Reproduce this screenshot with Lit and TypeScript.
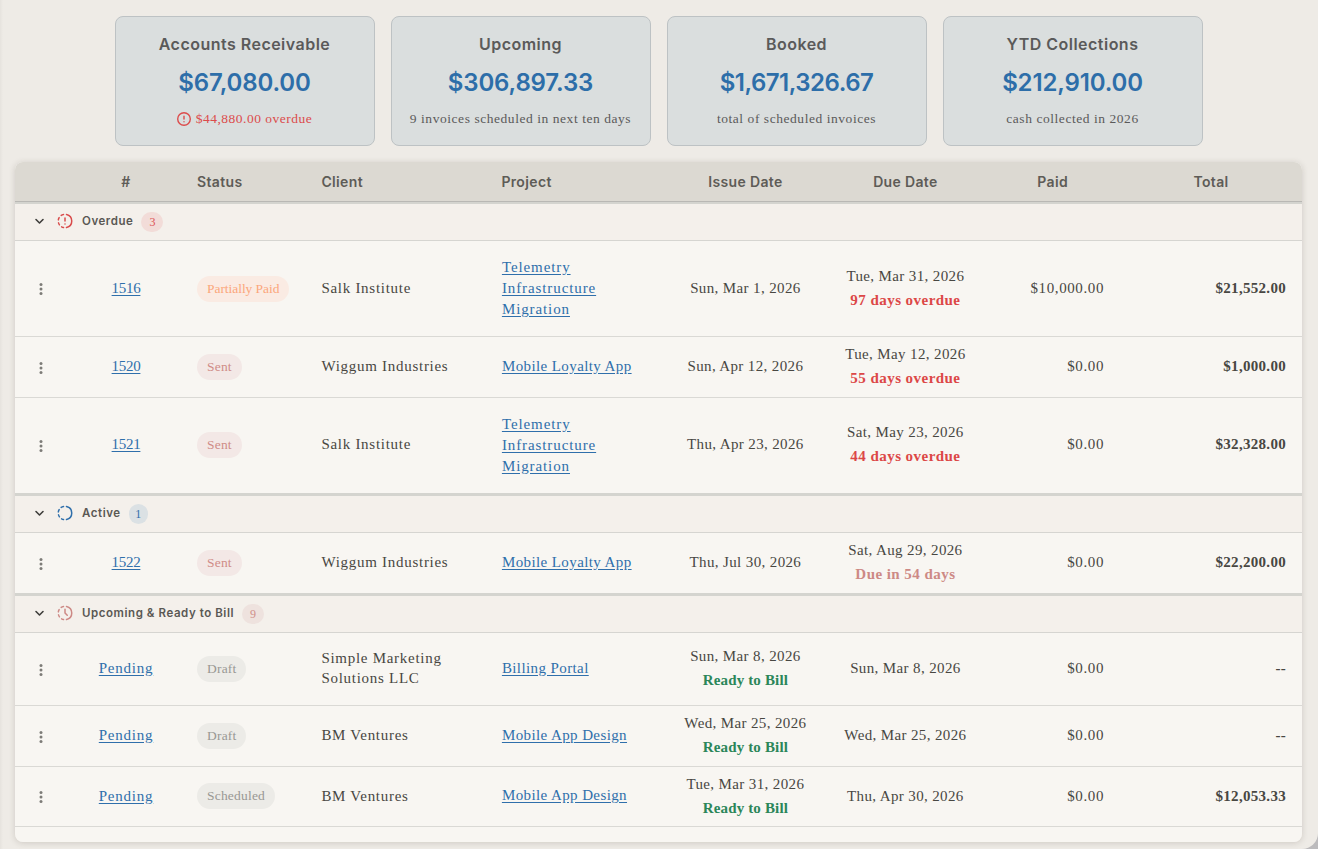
import { css, html, LitElement, nothing, svg } from "lit";
import { customElement } from "lit/decorators.js";
import { classMap } from "lit/directives/class-map.js";

type Status = "Partially Paid" | "Sent" | "Draft" | "Scheduled";

interface Invoice {
	number: string;
	status: Status;
	client: string;
	project: string;
	issued: string;
	ready?: boolean;
	due: string;
	dueNote?: string;
	late?: boolean;
	paid: string;
	total: string;
}

interface Group {
	kind: "overdue" | "active" | "upcoming";
	label: string;
	count: number;
	invoices: Invoice[];
}

const summaries = [
	{
		title: "Accounts Receivable",
		amount: "$67,080.00",
		note: "$44,880.00 overdue",
		kind: "alert",
	},
	{
		title: "Upcoming",
		amount: "$306,897.33",
		note: "9 invoices scheduled in next ten days",
		kind: "upcoming",
	},
	{
		title: "Booked",
		amount: "$1,671,326.67",
		note: "total of scheduled invoices",
		kind: "booked",
	},
	{
		title: "YTD Collections",
		amount: "$212,910.00",
		note: "cash collected in 2026",
		kind: "collected",
	},
];

const groups: Group[] = [
	{
		kind: "overdue",
		label: "Overdue",
		count: 3,
		invoices: [
			{
				number: "1516",
				status: "Partially Paid",
				client: "Salk Institute",
				project: "Telemetry Infrastructure Migration",
				issued: "Sun, Mar 1, 2026",
				due: "Tue, Mar 31, 2026",
				dueNote: "97 days overdue",
				late: true,
				paid: "$10,000.00",
				total: "$21,552.00",
			},
			{
				number: "1520",
				status: "Sent",
				client: "Wiggum Industries",
				project: "Mobile Loyalty App",
				issued: "Sun, Apr 12, 2026",
				due: "Tue, May 12, 2026",
				dueNote: "55 days overdue",
				late: true,
				paid: "$0.00",
				total: "$1,000.00",
			},
			{
				number: "1521",
				status: "Sent",
				client: "Salk Institute",
				project: "Telemetry Infrastructure Migration",
				issued: "Thu, Apr 23, 2026",
				due: "Sat, May 23, 2026",
				dueNote: "44 days overdue",
				late: true,
				paid: "$0.00",
				total: "$32,328.00",
			},
		],
	},
	{
		kind: "active",
		label: "Active",
		count: 1,
		invoices: [
			{
				number: "1522",
				status: "Sent",
				client: "Wiggum Industries",
				project: "Mobile Loyalty App",
				issued: "Thu, Jul 30, 2026",
				due: "Sat, Aug 29, 2026",
				dueNote: "Due in 54 days",
				paid: "$0.00",
				total: "$22,200.00",
			},
		],
	},
	{
		kind: "upcoming",
		label: "Upcoming & Ready to Bill",
		count: 9,
		invoices: [
			{
				number: "Pending",
				status: "Draft",
				client: "Simple Marketing Solutions LLC",
				project: "Billing Portal",
				issued: "Sun, Mar 8, 2026",
				ready: true,
				due: "Sun, Mar 8, 2026",
				paid: "$0.00",
				total: "--",
			},
			{
				number: "Pending",
				status: "Draft",
				client: "BM Ventures",
				project: "Mobile App Design",
				issued: "Wed, Mar 25, 2026",
				ready: true,
				due: "Wed, Mar 25, 2026",
				paid: "$0.00",
				total: "--",
			},
			{
				number: "Pending",
				status: "Scheduled",
				client: "BM Ventures",
				project: "Mobile App Design",
				issued: "Tue, Mar 31, 2026",
				ready: true,
				due: "Thu, Apr 30, 2026",
				paid: "$0.00",
				total: "$12,053.33",
			},
		],
	},
];

@customElement("summary-card")
export class SummaryCard extends LitElement {
	static override properties = {
		heading: { type: String },
		amount: { type: String },
		note: { type: String },
		kind: { type: String },
	};

	declare heading: string;
	declare amount: string;
	declare note: string;
	declare kind: string;

	static override styles = css`
		:host {
			display: flex;
			flex-direction: column;
			align-items: center;
			box-sizing: border-box;
			width: 260px;
			height: 130px;
			padding-top: 15px;
			border: 1px solid #bdc2c4;
			border-radius: 8px;
			background: #dadede;
			color: #5a5a5a;
			white-space: nowrap;
		}

		.heading {
			font: 600 16px/24px Inter, sans-serif;
			letter-spacing: 0.48px;
		}

		.amount {
			margin-top: 9px;
			font: 600 24px/36px Inter, sans-serif;
			letter-spacing: -0.15px;
			color: #2d6ea9;
		}

		.booked.amount {
			letter-spacing: -0.5px;
		}

		.note {
			display: flex;
			align-items: center;
			gap: 5px;
			margin-top: 8px;
			font: 13.5px/20px "Liberation Serif", serif;
			letter-spacing: 0.55px;
		}

		.alert {
			color: #dc4c4c;
			letter-spacing: 0.5px;
		}
	`;

	override render() {
		return html`
			<div class="heading">${this.heading}</div>
			<div class="amount ${this.kind === "booked" ? "booked" : ""}">${this.amount}</div>
			<div class="note ${this.kind}">
				${
					this.kind === "alert"
						? html`
							<svg
								width="14"
								height="14"
								viewBox="2 2 20 20"
								fill="none"
								stroke="currentColor"
								stroke-width="2"
								stroke-linecap="round"
							>
								<circle cx="12" cy="12" r="9" />
								<path d="M12 8v4M12 16h.01" />
							</svg>
						`
						: nothing
				}
				<span>${this.note}</span>
			</div>
		`;
	}
}

@customElement("app-root")
export class AppRoot extends LitElement {
	static override styles = css`
		:host {
			display: block;
			height: 849px;
			overflow: hidden;
			background: #bcbbbd;
		}

		* {
			box-sizing: border-box;
		}

		.page {
			height: 849px;
			padding: 16px 16px 7px 15px;
			border-bottom-right-radius: 16px;
			background: linear-gradient(90deg, #e6e3de, #eeebe6 3px);
			color: #484742;
			font: 15px/20px "Liberation Serif", serif;
		}

		.cards {
			display: flex;
			justify-content: center;
			gap: 16px;
			margin-bottom: 16px;
		}

		.table {
			height: 680px;
			overflow: hidden;
			border-radius: 8px;
			background: #f8f6f2;
		}

		.shadow {
			border-radius: 8px;
			box-shadow: 0 1px 6px rgba(60, 50, 40, 0.18);
		}

		.head,
		.row {
			display: grid;
			grid-template-columns: 56px 110px 124.4px 180px 180px 160px 160px 134.6px 182px;
		}

		.head {
			height: 40px;
			align-items: center;
			border-bottom: 1px solid #b9b8b4;
			background: #dcd9d2;
			color: #5e5c57;
			font: 600 14px/20px Inter, sans-serif;
			letter-spacing: 0.35px;
		}

		.head > div,
		.cell {
			padding: 0 16px;
		}

		.center {
			text-align: center;
		}

		.group {
			display: flex;
			align-items: center;
			height: 40px;
			padding: 0 0 2px 17px;
			border-top: 3px solid #d4d4cf;
			border-bottom: 1px solid #d6d5d1;
			background: #f4f0eb;
		}

		.group.overdue {
			height: 39px;
			border-top-width: 2px;
		}

		.chevron {
			margin-right: 10px;
			color: #3f3e3b;
		}

		.label {
			margin: 0 8px;
			color: #5a5854;
			font: 600 11.5px/16px Inter, sans-serif;
			letter-spacing: 0.56px;
		}

		.count {
			min-width: 19px;
			height: 20px;
			margin-top: 2px;
			padding: 0 8px;
			border-radius: 10px;
			font-size: 12px;
			line-height: 21px;
		}

		.overdue .icon {
			color: #d94b4b;
		}

		.overdue .count {
			background: #f2dcd8;
			color: #dc5555;
		}

		.active .icon {
			color: #2f6fab;
		}

		.active .count {
			padding: 0 6.5px;
			background: #dbe1e4;
			color: #2f6fab;
		}

		.upcoming .icon {
			color: #cd8985;
		}

		.upcoming .count {
			background: #eee2de;
			color: #d0908b;
		}

		.row {
			height: 61px;
			align-items: center;
			padding-bottom: 2px;
			border-bottom: 1px solid #dad9d5;
		}

		.row:has(+ .group) {
			height: 60px;
			border-bottom: none;
		}

		.row.tall {
			height: 96px;
		}

		.row.tall:has(+ .group) {
			height: 95px;
			padding-bottom: 3px;
		}

		.row.medium {
			height: 73px;
		}

		.row:last-child {
			height: 60px;
		}

		.menu {
			margin: 3px 0 0 18px;
			color: #7d7c78;
		}

		a {
			color: #2f6fab;
			text-decoration: underline;
			text-underline-offset: 2px;
			cursor: pointer;
		}

		.number {
			letter-spacing: -0.3px;
		}

		.pending {
			letter-spacing: 0.75px;
		}

		.pill {
			display: inline-block;
			height: 26px;
			margin-top: 1px;
			padding: 0 10px;
			border-radius: 13px;
			font-size: 13.5px;
			line-height: 26px;
			letter-spacing: 0.2px;
			vertical-align: top;
			white-space: nowrap;
			background: #ecebe7;
			color: #999894;
		}

		.pill.partially-paid {
			margin-top: 2px;
			letter-spacing: -0.05px;
			background: #faebe3;
			color: #fba77c;
		}

		.pill.sent {
			background: #f3e8e6;
			color: #d08c88;
		}

		.client {
			padding-right: 30px;
			letter-spacing: 0.72px;
		}

		.project {
			padding-left: 16.5px;
			line-height: 21px;
			letter-spacing: 0.4px;
		}

		.tall .project {
			margin-top: 2px;
			letter-spacing: 0.9px;
		}

		.date {
			line-height: 24px;
			letter-spacing: 0.37px;
			padding: 0;
			text-align: center;
			white-space: nowrap;
		}

		.date b {
			display: block;
			letter-spacing: 0.45px;
			color: #cd8985;
		}

		.date b.late {
			color: #dc4747;
		}

		.date b.ready {
			letter-spacing: 0.15px;
			color: #2b8659;
		}

		.money {
			text-align: right;
			letter-spacing: 0.6px;
		}

		.total {
			font-weight: 700;
			letter-spacing: 0.3px;
		}
	`;

	private renderProgress(kind: Group["kind"]) {
		const marks = {
			overdue: "M12 8v4M12 16v.01",
			active: "",
			upcoming: "M12 7v5l3 3",
		};

		return html`
			<svg
				class="icon"
				width="18"
				height="18"
				viewBox="0 0 24 24"
				fill="none"
				stroke="currentColor"
				stroke-width="2"
				stroke-linecap="round"
				stroke-linejoin="round"
			>
				<path
					d="M10 20.777a8.942 8.942 0 0 1-2.48-.969M14 3.223a9.003 9.003 0 0 1 0 17.554M4.579 17.093a8.961 8.961 0 0 1-1.227-2.592M3.124 10.5c.16-.95.468-1.85.9-2.675l.169-.305M6.907 4.579a8.954 8.954 0 0 1 3.093-1.356"
				/>
				${svg`<path d=${marks[kind]} />`}
			</svg>
		`;
	}

	private renderRow(invoice: Invoice) {
		const size = {
			row: true,
			tall: invoice.project.length > 30,
			medium: invoice.client.length > 20,
		};

		return html`
			<div class=${classMap(size)}>
				<svg
					class="menu"
					width="16"
					height="16"
					viewBox="0 0 16 16"
					fill="currentColor"
				>
					<circle cx="8" cy="3.4" r="1.5" />
					<circle cx="8" cy="8" r="1.5" />
					<circle cx="8" cy="12.6" r="1.5" />
				</svg>
				<div class="cell center">
					<a class=${invoice.number === "Pending" ? "pending" : "number"}>${invoice.number}</a>
				</div>
				<div class="cell">
					<span class="pill ${invoice.status.toLowerCase().replace(" ", "-")}">${invoice.status}</span>
				</div>
				<div class="cell client">${invoice.client}</div>
				<div class="cell project"><a>${invoice.project}</a></div>
				<div class="cell date">
					${invoice.issued}
					${invoice.ready ? html`<b class="ready">Ready to Bill</b>` : nothing}
				</div>
				<div class="cell date">
					${invoice.due}
					${
						invoice.dueNote
							? html`<b class=${classMap({ late: !!invoice.late })}>${invoice.dueNote}</b>`
							: nothing
					}
				</div>
				<div class="cell money">${invoice.paid}</div>
				<div class="cell money total">${invoice.total}</div>
			</div>
		`;
	}

	private renderGroup(group: Group) {
		return html`
			<div class="group ${group.kind}">
				<svg
					class="chevron"
					width="14"
					height="14"
					viewBox="0 0 14 14"
					fill="none"
					stroke="currentColor"
					stroke-width="1.6"
					stroke-linecap="round"
					stroke-linejoin="round"
				>
					<path d="M4 5.5 7.5 9 11 5.5" />
				</svg>
				${this.renderProgress(group.kind)}
				<span class="label">${group.label}</span>
				<span class="count">${group.count}</span>
			</div>
			${group.invoices.map((invoice) => this.renderRow(invoice))}
		`;
	}

	override render() {
		return html`
			<div class="page">
				<div class="cards">
					${summaries.map(
						(item) => html`
							<summary-card
								.heading=${item.title}
								.amount=${item.amount}
								.note=${item.note}
								.kind=${item.kind}
							></summary-card>
						`,
					)}
				</div>
				<div class="shadow">
					<div class="table">
						<div class="head">
							<div></div>
							<div class="center">#</div>
							<div>Status</div>
							<div>Client</div>
							<div>Project</div>
							<div class="center">Issue Date</div>
							<div class="center">Due Date</div>
							<div class="center">Paid</div>
							<div class="center">Total</div>
						</div>
						${groups.map((group) => this.renderGroup(group))}
					</div>
				</div>
			</div>
		`;
	}
}

declare global {
	interface HTMLElementTagNameMap {
		"app-root": AppRoot;
		"summary-card": SummaryCard;
	}
}
